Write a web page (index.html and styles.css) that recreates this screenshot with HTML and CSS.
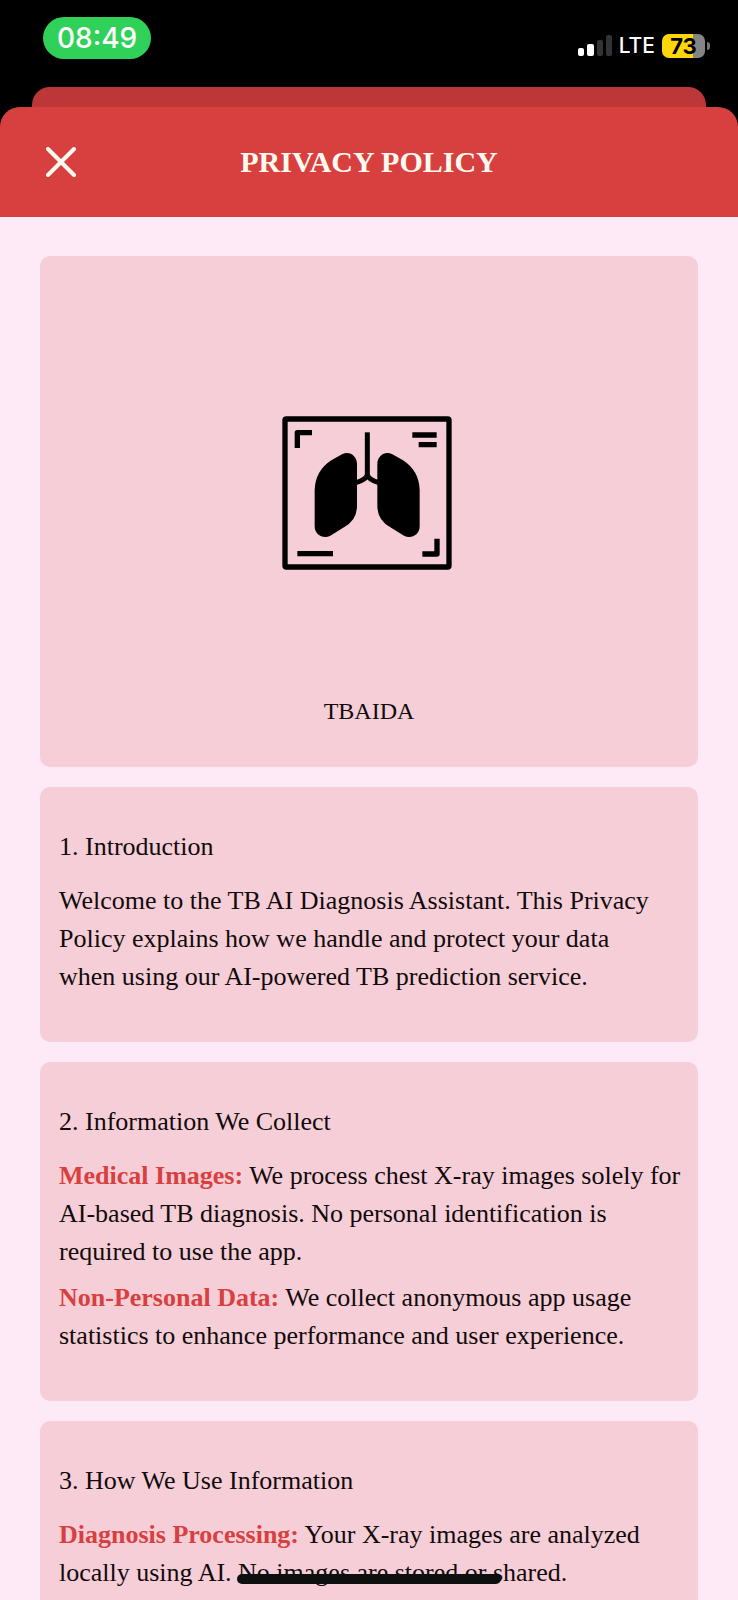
FILE: index.html
```html
<!DOCTYPE html>
<html lang="en">
<head>
<meta charset="utf-8">
<meta name="viewport" content="width=device-width, initial-scale=1">
<title>Privacy Policy</title>
<link rel="stylesheet" href="styles.css">
</head>
<body>
<div class="screen">
  <div class="status">
    <time class="clock">08:49</time>
    <div class="indicators">
      <svg class="signal" width="34" height="22" viewBox="0 0 34 22" aria-hidden="true">
        <rect x="0" y="13" width="6" height="8" rx="2" fill="#fff"/>
        <rect x="9" y="9" width="7" height="12" rx="2" fill="#fff"/>
        <rect x="19" y="5" width="6" height="16" rx="2" fill="#333"/>
        <rect x="28" y="0" width="6" height="21" rx="2" fill="#333"/>
      </svg>
      <span class="network">LTE</span>
      <div class="battery"><span class="level">73</span></div>
    </div>
  </div>
  <div class="backsheet"></div>
  <div class="sheet">
    <header class="header">
      <button class="close" type="button" aria-label="Close">
        <svg width="30" height="30" viewBox="0 0 30 30" fill="none" stroke="#fffaf0" stroke-width="4" stroke-linecap="round"><path d="M2 2l26 26M28 2L2 28"/></svg>
      </button>
      <h1 class="title">PRIVACY POLICY</h1>
    </header>
    <main class="content">
      <section class="card brand">
        <svg class="logo" width="174" height="154" viewBox="0 0 522 462" fill="none" stroke="#000" stroke-width="16" aria-hidden="true">
          <rect x="9" y="9" width="492" height="444" rx="4"/>
          <path d="M46 96V50H90M391 57H464M410 86H464M46 413H153M421 414H465V368" stroke-linejoin="round"/>
          <path d="M256 49V180" stroke-width="15"/>
          <path d="M256 178q-6 14-34 22M256 178q6 14 34 22" stroke-width="15"/>
          <path d="M225 144V270Q225 312 186 334L145 359C125 370 98 358 98 331V222Q100 164 148 133L180 115C202 103 225 120 225 144Z" fill="#000" stroke="none"/>
          <path d="M286 144V270Q286 312 325 334L366 359C386 370 413 358 413 331V222Q411 164 363 133L331 115C309 103 286 120 286 144Z" fill="#000" stroke="none"/>
        </svg>
        <p class="name">TBAIDA</p>
      </section>
      <section class="card">
        <h2 class="heading">1. Introduction</h2>
        <p class="text">Welcome to the TB AI Diagnosis Assistant. This Privacy Policy explains how we handle and protect your data<br>when using our AI-powered TB prediction service.</p>
      </section>
      <section class="card">
        <h2 class="heading">2. Information We Collect</h2>
        <p class="text"><strong class="term">Medical Images:</strong> We process chest X-ray images solely for AI-based TB diagnosis. No personal identification is required to use the app.</p>
        <p class="text"><strong class="term">Non-Personal Data:</strong> We collect anonymous app usage statistics to enhance performance and user experience.</p>
      </section>
      <section class="card">
        <h2 class="heading">3. How We Use Information</h2>
        <p class="text"><strong class="term">Diagnosis Processing:</strong> Your X-ray images are analyzed locally using AI. No images are stored or shared.</p>
      </section>
    </main>
  </div>
  <div class="home"></div>
</div>
</body>
</html>
```
FILE: styles.css
```css
* { box-sizing: border-box; margin: 0; padding: 0; }
body { background: #000; }
.screen {
  position: relative;
  display: flex;
  flex-direction: column;
  height: 100vh;
  overflow: hidden;
  color: #110b0c;
  font-family: "Liberation Serif", serif;
}
.status {
  flex: none;
  display: flex;
  justify-content: space-between;
  align-items: flex-start;
  height: 87px;
  padding: 17px 28px 0 43px;
  color: #fff;
  font-family: Inter, "Liberation Sans", sans-serif;
}
.clock {
  padding: 0 14px;
  border-radius: 21px;
  background: #30d158;
  font-size: 28px;
  font-weight: 500;
  line-height: 42px;
}
.indicators { display: flex; align-items: center; gap: 7px; height: 24px; margin-top: 17px; }
.network { font-size: 21px; font-weight: 500; line-height: 24px; }
.battery { display: flex; align-items: center; gap: 2px; }
.level {
  width: 43px;
  border-radius: 7px;
  background: linear-gradient(to right, #ffd60a 73%, #858585 73%);
  color: #000;
  font-size: 22px;
  font-weight: 700;
  line-height: 24px;
  text-align: center;
}
.battery::after { content: ""; width: 3px; height: 8px; border-radius: 0 3px 3px 0; background: #777; }
.backsheet { flex: none; height: 40px; margin: 0 32px -20px; border-radius: 18px 18px 0 0; background: #bd3739; }
.sheet {
  position: relative;
  flex: 1;
  min-height: 0;
  display: flex;
  flex-direction: column;
}
.header {
  flex: none;
  display: grid;
  grid-template-columns: 1fr auto 1fr;
  align-items: center;
  height: 110px;
  padding: 0 46px;
  border-radius: 20px 20px 0 0;
  background: #d84040;
}
.close { justify-self: start; display: flex; border: 0; background: none; }
.title { color: #fffaf0; font-size: 30px; font-weight: 700; line-height: 40px; }
.content {
  flex: 1;
  min-height: 0;
  display: flex;
  flex-direction: column;
  gap: 20px;
  padding: 39px 40px;
  background: #feeaf6;
  overflow: hidden;
}
.card { flex: none; padding: 41px 13px 38px 19px; border-radius: 10px; background: #f6ced7; }
.brand { display: flex; flex-direction: column; align-items: center; padding: 160px 20px 37px; }
.name { margin-top: 122px; font-size: 24px; line-height: 38px; }
.heading { margin-bottom: 16px; font-size: 26px; font-weight: 400; line-height: 38px; }
.text { margin-bottom: 8px; font-size: 26px; line-height: 38px; }
.term { color: #d84040; font-weight: 700; }
.home {
  position: absolute;
  bottom: 16px;
  left: 50%;
  width: 264px;
  height: 10px;
  margin-left: -132px;
  border-radius: 5px;
  background: #0e100f;
}
```
